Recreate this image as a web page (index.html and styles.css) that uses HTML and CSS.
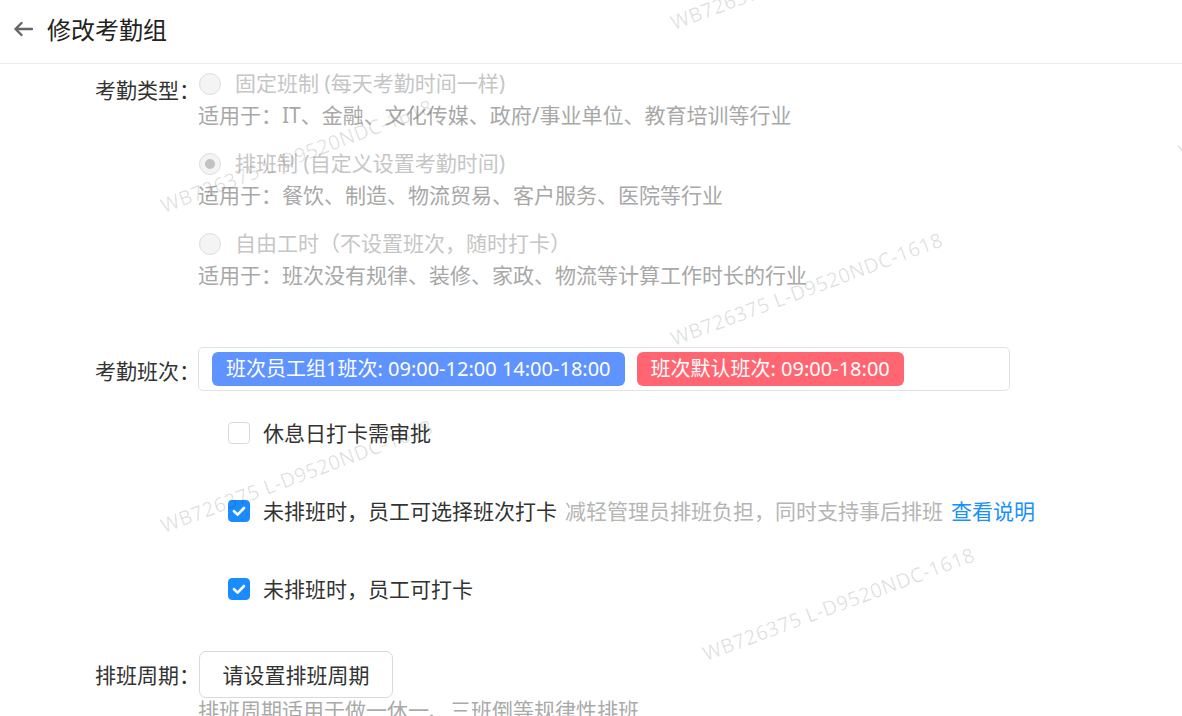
FILE: index.html
```html
<!DOCTYPE html>
<html lang="zh-CN">
<head>
<meta charset="utf-8">
<title>修改考勤组</title>
<link rel="stylesheet" href="styles.css">
</head>
<body>
<div class="page">
  <header class="topbar">
    <svg class="back" width="20" height="16" viewBox="0 0 20 16" aria-hidden="true">
      <path d="M19 8H2.5M8.5 2L2.5 8L8.5 14" fill="none" stroke="#666" stroke-width="2.4" stroke-linecap="round" stroke-linejoin="round"/>
    </svg>
    <h1 class="title">修改考勤组</h1>
  </header>

  <main class="form">
    <section class="row row-type">
      <div class="label label-type">考勤类型：</div>
      <div class="control options">
        <div class="option">
          <div class="opt-line"><span class="radio"></span><span class="opt-text">固定班制 (每天考勤时间一样)</span></div>
          <div class="opt-desc">适用于：IT、金融、文化传媒、政府/事业单位、教育培训等行业</div>
        </div>
        <div class="option">
          <div class="opt-line"><span class="radio radio-on"></span><span class="opt-text">排班制 (自定义设置考勤时间)</span></div>
          <div class="opt-desc">适用于：餐饮、制造、物流贸易、客户服务、医院等行业</div>
        </div>
        <div class="option">
          <div class="opt-line"><span class="radio"></span><span class="opt-text">自由工时（不设置班次，随时打卡）</span></div>
          <div class="opt-desc">适用于：班次没有规律、装修、家政、物流等计算工作时长的行业</div>
        </div>
      </div>
    </section>

    <section class="row row-shift">
      <div class="label label-shift">考勤班次：</div>
      <div class="control">
        <div class="tagbox">
          <span class="tag tag-blue">班次员工组1班次: 09:00-12:00 14:00-18:00</span>
          <span class="tag tag-red">班次默认班次: 09:00-18:00</span>
        </div>
        <div class="checklist">
          <div class="check-row"><span class="checkbox"></span><span class="check-text">休息日打卡需审批</span></div>
          <div class="check-row"><span class="checkbox checked"><svg viewBox="0 0 22 22" width="22" height="22"><path d="M6 11.2L9.6 14.6L16 8" fill="none" stroke="#fff" stroke-width="2.6" stroke-linecap="round" stroke-linejoin="round"/></svg></span><span class="check-text">未排班时，员工可选择班次打卡</span><span class="hint">减轻管理员排班负担，同时支持事后排班</span><a class="link" href="#">查看说明</a></div>
          <div class="check-row"><span class="checkbox checked"><svg viewBox="0 0 22 22" width="22" height="22"><path d="M6 11.2L9.6 14.6L16 8" fill="none" stroke="#fff" stroke-width="2.6" stroke-linecap="round" stroke-linejoin="round"/></svg></span><span class="check-text">未排班时，员工可打卡</span></div>
        </div>
      </div>
    </section>

    <section class="row row-period">
      <div class="label label-period">排班周期：</div>
      <div class="control">
        <button class="btn" type="button">请设置排班周期</button>
        <div class="period-hint">排班周期适用于做一休一、三班倒等规律性排班</div>
      </div>
    </section>
  </main>

  <div class="watermarks" aria-hidden="true">
    <span class="wm wm-1">WB726375 L-D9520NDC-1618</span>
    <span class="wm wm-2">WB726375 L-D9520NDC-1618</span>
    <span class="wm wm-3">WB726375 L-D9520NDC-1618</span>
    <span class="wm wm-4">WB726375 L-D9520NDC-1618</span>
    <span class="wm wm-5">WB726375 L-D9520NDC-1618</span>
    <span class="wm wm-6">WB726375 L-D9520NDC-1618</span>
  </div>
</div>
</body>
</html>
```

FILE: styles.css
```css
html, body {
  margin: 0;
  padding: 0;
  background: #fff;
}

body {
  font-family: "Noto Sans", "Noto Sans CJK SC", sans-serif;
  color: #333;
  font-size: 21px;
}

.page {
  position: relative;
  width: 1182px;
  height: 716px;
  overflow: hidden;
}

.topbar {
  height: 63px;
  border-bottom: 1px solid #ececec;
  display: flex;
  align-items: center;
  padding-left: 13px;
  gap: 14px;
  box-sizing: content-box;
}

.back {
  display: block;
  margin-top: -6px;
}

.title {
  margin: 0;
  font-size: 24px;
  font-weight: 400;
  color: #222;
  line-height: 32px;
  margin-top: -6px;
  font-family: "Noto Sans CJK SC", sans-serif;
}

.form {
  padding-top: 4px;
  display: flex;
  flex-direction: column;
}

.row {
  display: grid;
  grid-template-columns: 188px 1fr;
  column-gap: 10px;
}

.label {
  text-align: right;
  color: #333;
  font-family: "Noto Sans CJK SC", sans-serif;
  font-size: 21px;
  white-space: nowrap;
  margin-right: -12px;
}

.label-type {
  line-height: 32px;
  padding-top: 5px;
}

.label-shift {
  line-height: 44px;
  padding-top: 1px;
}

.label-period {
  line-height: 46px;
  padding-top: 0;
}

.control {
  position: relative;
  z-index: 1;
}

.options {
  display: flex;
  flex-direction: column;
  gap: 17px;
}

.option {
  display: flex;
  flex-direction: column;
  margin-top: -1px;
}

.opt-line {
  display: flex;
  align-items: center;
  height: 32px;
  gap: 14px;
  margin-left: 1px;
}

.radio {
  width: 20px;
  height: 20px;
  border-radius: 50%;
  border: 1px solid #dedede;
  background: #f4f4f4;
  position: relative;
  flex: none;
  margin-top: 1px;
}

.radio-on::after {
  content: "";
  position: absolute;
  left: 5px;
  top: 5px;
  width: 10px;
  height: 10px;
  border-radius: 50%;
  background: #c2c2c2;
}

.opt-text {
  color: #c6c6c6;
  line-height: 32px;
  white-space: nowrap;
}

.opt-desc {
  color: #a8a8a8;
  line-height: 32px;
  white-space: nowrap;
}

.row-shift {
  margin-top: 56px;
}

.tagbox {
  width: 797px;
  height: 42px;
  border: 1px solid #e3e3e3;
  border-radius: 5px;
  display: flex;
  align-items: center;
  gap: 12px;
  padding-left: 13px;
}

.tag {
  height: 34px;
  line-height: 34px;
  padding: 0 14px;
  border-radius: 6px;
  color: #fff;
  font-size: 20px;
  white-space: nowrap;
}

.tag-blue {
  background: #5f93ff;
}

.tag-red {
  background: #ff6672;
}

.checklist {
  margin-top: 25px;
  padding-left: 30px;
  display: flex;
  flex-direction: column;
  gap: 46px;
}

.check-row {
  display: flex;
  align-items: center;
  height: 32px;
  white-space: nowrap;
}

.checkbox {
  width: 22px;
  height: 22px;
  box-sizing: border-box;
  border: 1px solid #d9d9d9;
  border-radius: 4px;
  background: #fff;
  flex: none;
  margin-right: 13px;
  display: flex;
  margin-top: 2px;
}

.checkbox.checked {
  background: #1a8cff;
  border-color: #1a8cff;
}

.checkbox.checked svg {
  margin: -1px;
}

.check-text {
  color: #333;
}

.hint {
  color: #b5b5b5;
  margin-left: 8px;
}

.link {
  color: #1890ff;
  text-decoration: none;
  margin-left: 8px;
}

.row-period {
  margin-top: 47px;
}

.btn {
  width: 194px;
  height: 47px;
  border: 1px solid #d9d9d9;
  border-radius: 7px;
  background: #fff;
  color: #333;
  font-family: "Noto Sans CJK SC", sans-serif;
  font-size: 21px;
  padding: 0 0 2px;
  margin-left: 1px;
  cursor: pointer;
}

.period-hint {
  margin-top: -2px;
  color: #aaa;
  line-height: 28px;
  white-space: nowrap;
}

.watermarks {
  position: absolute;
  inset: 0;
  pointer-events: none;
  z-index: 2;
}

.wm {
  position: absolute;
  font-family: "Open Sans", sans-serif;
  font-size: 20px;
  line-height: 20px;
  color: rgba(0, 0, 0, 0.13);
  white-space: nowrap;
  transform-origin: 0 100%;
  transform: rotate(-20.4deg);
  letter-spacing: 0.5px;
}

.wm-1 { left: 675px; top: 13px; }
.wm-2 { left: 165px; top: 196px; }
.wm-3 { left: 675px; top: 329px; }
.wm-4 { left: 165px; top: 516px; }
.wm-5 { left: 707px; top: 644px; }
.wm-6 { left: 1183px; top: 142px; }
```
